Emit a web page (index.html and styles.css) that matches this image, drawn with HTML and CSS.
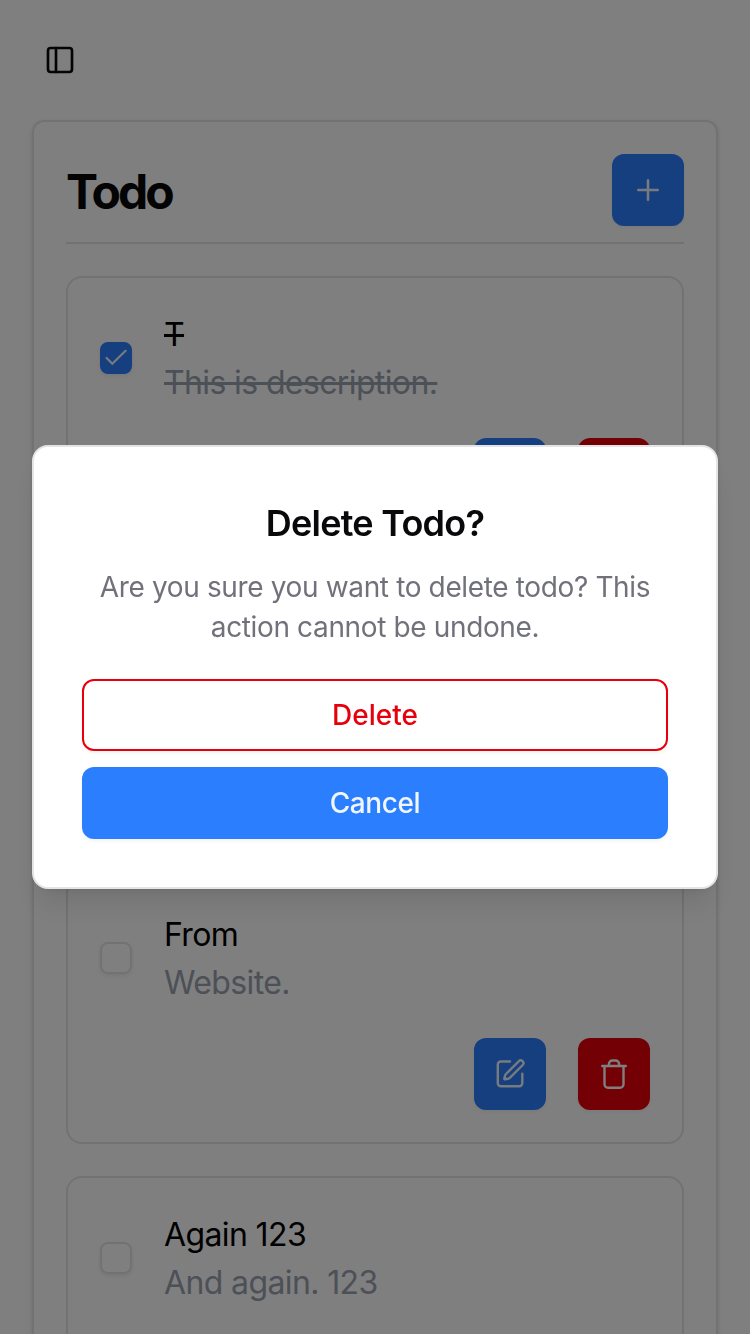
FILE: index.html
```html
<!DOCTYPE html>
<html lang="en">
<head>
<meta charset="utf-8">
<title>Todo</title>
<link rel="stylesheet" href="styles.css">
</head>
<body>
<div class="page">
  <header class="topbar">
    <button class="sidebar-toggle" aria-label="Toggle sidebar">
      <svg width="32" height="32" viewBox="0 0 24 24" fill="none" stroke="currentColor" stroke-width="2" stroke-linecap="round" stroke-linejoin="round"><rect x="3" y="3" width="18" height="18" rx="2"/><path d="M9 3v18"/></svg>
    </button>
  </header>
  <main class="card">
    <div class="card-header">
      <h1 class="card-title">Todo</h1>
      <button class="icon-button primary" aria-label="Add">
        <svg width="32" height="32" viewBox="0 0 24 24" fill="none" stroke="currentColor" stroke-width="1.9" stroke-linecap="round"><path d="M4.700 12h14.600M12 4.700v14.600"/></svg>
      </button>
    </div>
    <ul class="list">
      <li class="item done">
        <div class="row">
          <span class="checkbox checked"><svg width="28" height="28" viewBox="0 0 28 28" fill="none" stroke="currentColor" stroke-width="2.200" stroke-linecap="round" stroke-linejoin="miter"><path d="M4.600 14l5.700 5.700L23.600 6.800"/></svg></span>
          <div class="text"><p class="name">T</p><p class="desc">This is description.</p></div>
        </div>
        <div class="actions"><button class="icon-button primary" aria-label="Edit"></button><button class="icon-button danger" aria-label="Delete"></button></div>
      </li>
      <li class="item"></li>
      <li class="item">
        <div class="row">
          <span class="checkbox"></span>
          <div class="text"><p class="name">From</p><p class="desc">Website.</p></div>
        </div>
        <div class="actions">
          <button class="icon-button primary" aria-label="Edit">
            <svg width="32" height="32" viewBox="0 0 32 32" fill="none" stroke="currentColor" stroke-width="2.400" stroke-linecap="round" stroke-linejoin="round"><path d="M16 3.500H6.800a3 3 0 0 0-3 3v18.700a3 3 0 0 0 3 3h18.500a3 3 0 0 0 3-3V15.700"/><path d="M24.700 3.300 12 16a4 4 0 0 0-1 1.800l-.6 2.600a.7.700 0 0 0 .9.900l2.600-.5a4 4 0 0 0 1.900-1L28.700 7a2.600 2.600 0 0 0-4-3.700Z"/></svg>
          </button>
          <button class="icon-button danger" aria-label="Delete">
            <svg width="32" height="32" viewBox="0 0 32 32" fill="none" stroke="currentColor" stroke-width="2.400" stroke-linecap="round" stroke-linejoin="round"><path d="M4.200 8h23.600M6.500 8v18.300a3.500 3.500 0 0 0 3.500 3.500h12a3.500 3.500 0 0 0 3.500-3.500V8M10.900 8V6a3.500 3.500 0 0 1 3.500-3.500h3.200A3.500 3.500 0 0 1 21.100 6v2"/></svg>
          </button>
        </div>
      </li>
      <li class="item">
        <div class="row">
          <span class="checkbox"></span>
          <div class="text"><p class="name">Again 123</p><p class="desc">And again. 123</p></div>
        </div>
      </li>
    </ul>
  </main>
</div>
<div class="overlay">
  <section class="dialog" role="alertdialog" aria-labelledby="dialog-title">
    <h2 class="dialog-title" id="dialog-title">Delete Todo?</h2>
    <p class="dialog-text">Are you sure you want to delete todo? This action cannot be undone.</p>
    <div class="dialog-actions">
      <button class="button outline">Delete</button>
      <button class="button solid">Cancel</button>
    </div>
  </section>
</div>
</body>
</html>
```
FILE: styles.css
```css
* { box-sizing: border-box; margin: 0; padding: 0; }
body {
  height: 1334px;
  overflow: hidden;
  background: #fff;
  color: #09090b;
  font-family: Inter, "Liberation Sans", sans-serif;
}
button { border: 0; background: none; font: inherit; color: inherit; }
svg { display: block; }
.page { height: 1334px; overflow: hidden; padding: 0 32px; }
.topbar { height: 120px; display: flex; align-items: center; }
.sidebar-toggle { padding: 12px; }
.card {
  border: 2px solid #e4e4e7;
  border-radius: 12px;
  padding: 32px;
  box-shadow: 0 2px 6px rgba(0, 0, 0, .1), 0 2px 4px -2px rgba(0, 0, 0, .1);
}
.card-header {
  display: flex;
  align-items: center;
  justify-content: space-between;
  padding-bottom: 16px;
  border-bottom: 2px solid #e4e4e7;
}
.card-title { padding-top: 3px; font-size: 48px; line-height: 64px; font-weight: 700; letter-spacing: -2.9px; }
.icon-button {
  width: 72px;
  height: 72px;
  display: flex;
  align-items: center;
  justify-content: center;
  border-radius: 12px;
  box-shadow: 0 2px 4px rgba(0, 0, 0, .05);
}
.primary { background: #2b7fff; color: #eff6ff; }
.danger { background: #e7000b; color: #fff; }
.list { list-style: none; display: flex; flex-direction: column; gap: 32px; padding-top: 32px; }
.item {
  height: 268px;
  border: 2px solid #e4e4e7;
  border-radius: 16px;
  padding: 32px;
  display: flex;
  flex-direction: column;
  gap: 32px;
}
.row { display: flex; align-items: center; gap: 32px; height: 96px; }
.checkbox {
  width: 32px;
  height: 32px;
  border: 2px solid #e4e4e7;
  border-radius: 8px;
  box-shadow: 0 2px 4px rgba(0, 0, 0, .08);
  color: #eff6ff;
}
.checked { background: #2b7fff; border-color: #2b7fff; }
.text { padding-top: 2px; font-size: 32px; line-height: 48px; letter-spacing: -.62px; }
.name { color: #000; }
.desc { color: #99a1af; }
.done p { text-decoration: line-through; text-decoration-thickness: 3px; }
.actions { display: flex; justify-content: flex-end; gap: 32px; }
.overlay {
  position: fixed;
  inset: 0;
  display: flex;
  align-items: center;
  justify-content: center;
  background: rgba(0, 0, 0, .5);
}
.dialog {
  width: 686px;
  border: 2px solid #e4e4e7;
  border-radius: 16px;
  padding: 48px;
  background: #fff;
  text-align: center;
  box-shadow: 0 20px 30px -6px rgba(0, 0, 0, .1), 0 8px 12px -8px rgba(0, 0, 0, .1);
}
.dialog-title { font-size: 36px; line-height: 56px; font-weight: 600; letter-spacing: -.74px; }
.dialog-text { margin-top: 16px; font-size: 28px; line-height: 40px; letter-spacing: -.36px; color: #71717b; }
.dialog-actions { display: flex; flex-direction: column; gap: 16px; margin-top: 32px; }
.button {
  height: 72px;
  border-radius: 12px;
  font-size: 28px;
  font-weight: 500;
  box-shadow: 0 2px 4px rgba(0, 0, 0, .05);
}
.outline { border: 2px solid #e7000b; color: #e7000b; }
.solid { background: #2b7fff; color: #eff6ff; letter-spacing: -.4px; }
```
